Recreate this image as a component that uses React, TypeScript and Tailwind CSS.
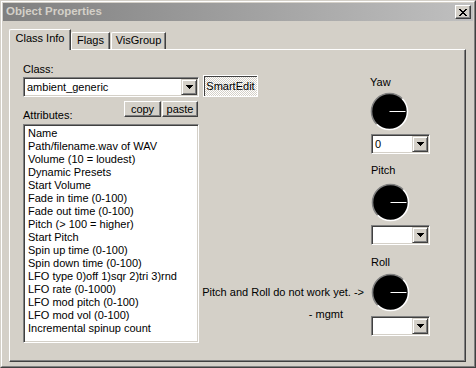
import React from 'react'

const raised =
  'border border-t-white border-l-white border-r-[#404040] border-b-[#404040] shadow-[inset_-1px_-1px_0_#808080] bg-[#d4d0c8]'
const sunken =
  'border border-t-[#808080] border-l-[#808080] border-r-white border-b-white shadow-[inset_1px_1px_0_#404040,inset_-1px_-1px_0_#d4d0c8]'

const attributes = [
  'Name',
  'Path/filename.wav of WAV',
  'Volume (10 = loudest)',
  'Dynamic Presets',
  'Start Volume',
  'Fade in time (0-100)',
  'Fade out time (0-100)',
  'Pitch (> 100 = higher)',
  'Start Pitch',
  'Spin up time (0-100)',
  'Spin down time (0-100)',
  'LFO type 0)off 1)sqr 2)tri 3)rnd',
  'LFO rate (0-1000)',
  'LFO mod pitch (0-100)',
  'LFO mod vol (0-100)',
  'Incremental spinup count',
]

// 8x7 pixel close glyph
const closeGlyph = ['XX....XX', '.XX..XX.', '..XXXX..', '...XX...', '..XXXX..', '.XX..XX.', 'XX....XX']

function CloseButton() {
  return (
    <div className="flex h-[14px] w-[16px] items-center justify-center border border-t-white border-l-white border-r-[#404040] border-b-[#404040] bg-[#d4d0c8] shadow-[inset_-1px_-1px_0_#808080]">
      <svg width="8" height="7" viewBox="0 0 8 7" shapeRendering="crispEdges">
        {closeGlyph.map((row, y) =>
          row.split('').map((c, x) =>
            c === 'X' ? <rect key={`${x}-${y}`} x={x} y={y} width="1" height="1" fill="#000" /> : null
          )
        )}
      </svg>
    </div>
  )
}

function Combo({ value, className }: { value?: string; className: string }) {
  return (
    <div className={`flex h-[20px] bg-white p-px ${sunken} ${className}`}>
      <div className="flex-1 overflow-hidden whitespace-nowrap pl-[2px] leading-[16px]">{value}</div>
      <div className="flex h-[16px] w-[16px] items-center justify-center border border-t-[#d4d0c8] border-l-[#d4d0c8] border-r-[#404040] border-b-[#404040] bg-[#d4d0c8] shadow-[inset_1px_1px_0_#ffffff,inset_-1px_-1px_0_#808080]">
        <svg width="7" height="4" viewBox="0 0 7 4" shapeRendering="crispEdges">
          <path d="M0 0H7V1H6V2H5V3H4V4H3V3H2V2H1V1H0Z" fill="#000" />
        </svg>
      </div>
    </div>
  )
}

function Dial() {
  return (
    <svg width="39" height="39" viewBox="0 0 39 39">
      <circle cx="19.5" cy="19.5" r="18" fill="#000" />
      <path d="M6.77 32.23 A18 18 0 0 1 32.23 6.77" fill="none" stroke="#808080" strokeWidth="1.6" />
      <path d="M32.23 6.77 A18 18 0 0 1 6.77 32.23" fill="none" stroke="#ffffff" strokeWidth="1.6" />
      <line x1="19.5" y1="19.5" x2="35.5" y2="19.5" stroke="#ffffff" />
    </svg>
  )
}

function App() {
  return (
    <div className="h-[368px] w-[476px] bg-[#d4d0c8] font-['Liberation_Sans',Arial,sans-serif] text-[11px] text-black">
      <div className="h-full border border-t-[#d4d0c8] border-l-[#d4d0c8] border-r-[#404040] border-b-[#404040]">
        <div className="flex h-full flex-col border border-t-white border-l-white border-r-[#808080] border-b-[#808080] p-px">
          {/* title bar */}
          <div className="flex h-[18px] items-center justify-between bg-gradient-to-r from-[#808080] to-[#c0c0c0] pl-[3px] pr-[2px]">
            <span className="text-[11.5px] font-bold text-[#d4d0c8]">Object Properties</span>
            <CloseButton />
          </div>

          <div className="flex flex-1 flex-col pl-[6px] pr-[7px] pt-[8px] pb-[3px]">
            {/* tabs */}
            <div className="flex h-[20px] items-end">
              <div className="relative z-10 mb-[-1px] h-[21px] w-[62px] rounded-tl-[2px] border-l border-t border-r border-l-white border-t-white border-r-[#404040] bg-[#d4d0c8] pt-[2px] text-center leading-[13px] shadow-[inset_-1px_0_0_#808080]">
                Class Info
              </div>
              <div className="h-[17px] w-[39px] rounded-tl-[2px] border-l border-t border-r border-l-white border-t-white border-r-[#404040] pt-[1px] text-center leading-[13px] shadow-[inset_-1px_0_0_#808080]">
                Flags
              </div>
              <div className="ml-px h-[17px] w-[55px] rounded-tl-[2px] border-l border-t border-r border-l-white border-t-white border-r-[#404040] pt-[1px] text-center leading-[13px] shadow-[inset_-1px_0_0_#808080]">
                VisGroup
              </div>
            </div>

            {/* panel */}
            <div className="flex flex-1 border border-t-white border-l-white border-r-[#404040] border-b-[#404040] pl-[13px] pr-[34px] pt-[13px] shadow-[inset_-1px_-1px_0_#808080]">
              {/* left column */}
              <div className="flex w-[176px] flex-col">
                <div className="h-[12px] leading-[12px]">Class:</div>
                <Combo value="ambient_generic" className="mt-[2px] w-[176px]" />
                <div className="flex h-[27px] justify-between">
                  <div className="self-end pb-[2px] leading-[13px]">Attributes:</div>
                  <div className="mr-px mt-[4px] flex self-start gap-px">
                    <div className={`flex h-[16px] w-[37px] items-center justify-center leading-[13px] ${raised}`}>copy</div>
                    <div className={`flex h-[16px] w-[36px] items-center justify-center leading-[13px] ${raised}`}>paste</div>
                  </div>
                </div>
                <div className={`h-[219px] w-[176px] bg-white pl-[4px] pt-[2px] ${sunken}`}>
                  {attributes.map((a) => (
                    <div key={a} className="h-[13px] whitespace-nowrap leading-[13px]">
                      {a}
                    </div>
                  ))}
                </div>
              </div>

              {/* middle column */}
              <div className="flex flex-1 flex-col pt-[12px]">
                <div className="ml-[4px] flex h-[22px] w-[55px] items-center justify-center border border-white bg-[repeating-conic-gradient(#ffffff_0%_25%,#d4d0c8_0%_50%)] bg-[length:2px_2px] leading-[13px] shadow-[inset_1px_1px_0_#404040]">
                  SmartEdit
                </div>
                <div className="mt-[189px] flex flex-col items-end pr-[6px]">
                  <div className="whitespace-nowrap leading-[13px]">Pitch and Roll do not work yet. -&gt;</div>
                  <div className="mr-[21px] mt-[9px] whitespace-nowrap leading-[13px]">- mgmt</div>
                </div>
              </div>

              {/* right column */}
              <div className="flex w-[61px] flex-col pt-[13px]">
                <div className="h-[13px] leading-[13px]">Yaw</div>
                <div className="mt-[3px] h-[39px]">
                  <Dial />
                </div>
                <Combo value="0" className="ml-px mt-[3px] w-[59px]" />
                <div className="ml-px mt-[10px] h-[13px] leading-[13px]">Pitch</div>
                <div className="ml-px mt-[6px] h-[39px]">
                  <Dial />
                </div>
                <Combo className="ml-px mt-[3px] w-[59px]" />
                <div className="ml-px mt-[11px] h-[13px] leading-[13px]">Roll</div>
                <div className="ml-px mt-[4px] h-[39px]">
                  <Dial />
                </div>
                <Combo className="ml-px mt-[4px] w-[59px]" />
              </div>
            </div>
          </div>
        </div>
      </div>
    </div>
  )
}

export default App
